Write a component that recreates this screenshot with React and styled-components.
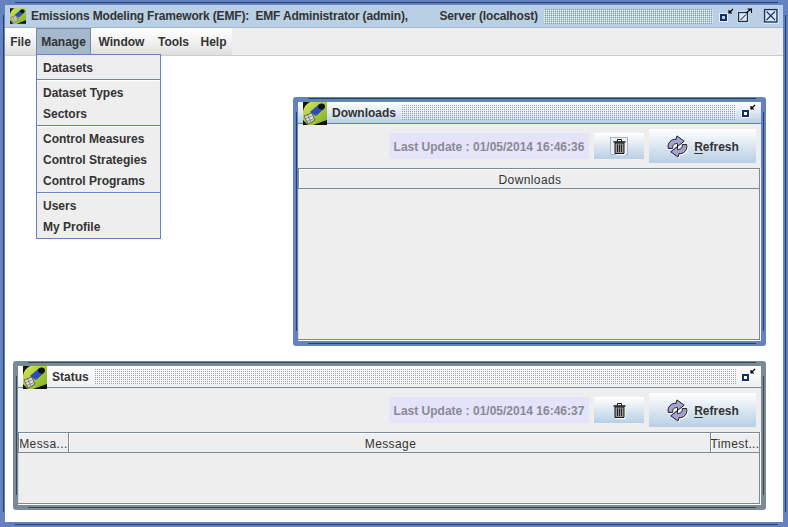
import React from 'react';
import styled, { createGlobalStyle } from 'styled-components';

const GlobalStyle = createGlobalStyle`
  html, body {
    margin: 0;
    padding: 0;
    background: #fff;
  }
  body {
    font-family: "Liberation Sans", Arial, sans-serif;
    font-size: 12px;
    color: #333;
  }
`;

const Frame = styled.div`
  position: relative;
  width: 788px;
  height: 527px;
  box-sizing: border-box;
  border: 5px solid #6382bf;
  display: flex;
  flex-direction: column;
  background: #fff;
`;

/* the dark grooves that run inside a Metal window border */
const Groove = styled.div`
  position: absolute;
  inset: 0;
  pointer-events: none;
  &::before {
    content: '';
    position: absolute;
    left: 10px;
    right: 5px;
    top: ${(p) => -p.$top}px;
    bottom: -3px;
    border-top: 1px solid ${(p) => p.$color};
    border-bottom: 1px solid ${(p) => p.$color};
  }
  &::after {
    content: '';
    position: absolute;
    left: -2px;
    right: -3px;
    top: 10px;
    bottom: 10px;
    border-left: 1px solid ${(p) => p.$color};
    border-right: 1px solid ${(p) => p.$color};
  }
`;

const TitleBar = styled.div`
  height: 23px;
  flex: none;
  box-sizing: border-box;
  display: flex;
  align-items: center;
  padding: 0 4px 0 5px;
  background: #b8cfe5;
  border-bottom: 1px solid #a3b8cc;
  font-weight: bold;
  color: #333;
  white-space: pre;
`;

const MainTitle = styled.span`
  margin-left: 5px;
  letter-spacing: -0.17px;
`;

const Bumps = styled.div`
  flex: 1;
  height: 15px;
  margin: 0 ${(p) => p.$right || 6}px 0 6px;
  background: conic-gradient(${(p) => p.$dark} 25%, transparent 0 50%, #fff 0 75%, transparent 0) 0 0 / 2px 2px;
  opacity: 0.75;
`;

const WindowIcons = styled.div`
  display: flex;
  align-items: center;
  gap: 2px;
`;

const CloseSlot = styled.div`
  display: flex;
  margin-left: 8px;
`;

const MenuBar = styled.div`
  height: 28px;
  flex: none;
  box-sizing: border-box;
  display: flex;
  background: #eee;
  border-bottom: 1px solid #ccc;
`;

const MenuItem = styled.div`
  width: ${(p) => p.$w}px;
  box-sizing: border-box;
  line-height: 29px;
  text-align: center;
  font-weight: bold;
  color: #333;
  background: ${(p) => (p.$open ? '#a3b8cc' : 'linear-gradient(#fff, #f2f2f2 50%, #dedede)')};
  box-shadow: ${(p) => (p.$open ? 'inset 1px 1px 0 #7a8a99, inset -1px 0 0 #7a8a99' : 'none')};
`;

const Desktop = styled.div`
  position: relative;
  flex: 1;
  background: #fff;
`;

const Popup = styled.div`
  position: absolute;
  left: 31px;
  top: -2px;
  width: 125px;
  box-sizing: border-box;
  background: #eee;
  border: 1px solid #6382bf;
  font-weight: bold;
  z-index: 5;
`;

const PopupGroup = styled.div`
  display: flex;
  flex-direction: column;
  padding: 2px 0 1px;
  & + & {
    border-top: 1px solid #6382bf;
    box-shadow: inset 0 1px 0 #fff;
  }
`;

const PopupItem = styled.div`
  height: 21px;
  line-height: 23px;
  padding-left: 6px;
  color: #333;
`;

const Internal = styled.div`
  position: absolute;
  left: ${(p) => p.$x}px;
  top: ${(p) => p.$y}px;
  width: ${(p) => p.$w}px;
  height: ${(p) => p.$h}px;
  box-sizing: border-box;
  border: 5px solid ${(p) => p.$color};
  border-radius: 3px;
  background: #eee;
  display: flex;
  flex-direction: column;
`;

const InnerTitle = styled.div`
  height: 22px;
  flex: none;
  box-sizing: border-box;
  display: flex;
  align-items: flex-start;
  padding: 0 4px 0 5px;
  font-weight: bold;
  color: #333;
  background: ${(p) => (p.$active ? 'linear-gradient(#fff, #b8cfe5)' : 'linear-gradient(#fff, #eee)')};
  border-bottom: 1px solid ${(p) => (p.$active ? '#6382bf' : '#7a8a99')};
`;

const TitleLabel = styled.span`
  margin-left: 5px;
  line-height: 23px;
`;

const InnerBumps = styled(Bumps)`
  margin-top: 3px;
  margin-left: 5px;
`;

const InnerIcons = styled.div`
  display: flex;
  margin-top: 2px;
`;

const Toolbar = styled.div`
  height: 44px;
  flex: none;
  box-sizing: border-box;
  display: flex;
  align-items: center;
  justify-content: flex-end;
  padding: 0 5px 0 0;
`;

const LastUpdate = styled.div`
  width: 200px;
  height: 26px;
  box-sizing: border-box;
  padding-top: 2px;
  display: flex;
  align-items: center;
  justify-content: center;
  background: #e3e3fa;
  color: #8a8a93;
  font-weight: bold;
`;

const TrashButton = styled.div`
  width: 50px;
  height: 26px;
  margin-left: 5px;
  display: flex;
  align-items: center;
  justify-content: center;
  background: linear-gradient(#fff, #b8cfe5);
`;

const TrashBox = styled.div`
  width: 18px;
  height: 18px;
  display: flex;
  align-items: center;
  justify-content: center;
  box-shadow: ${(p) => (p.$focus ? 'inset 0 0 0 1px #a3b8cc' : 'none')};
  background: ${(p) => (p.$focus ? '#eee' : 'transparent')};
  svg {
    filter: drop-shadow(1px 1px 0 #fff);
  }
`;

const RefreshButton = styled.div`
  width: 107px;
  height: 34px;
  margin-left: 5px;
  display: flex;
  align-items: center;
  justify-content: center;
  gap: 5px;
  background: linear-gradient(#fff, #b8cfe5);
  font-weight: bold;
  color: #333;
  svg {
    filter: drop-shadow(1px 1px 0 #fff);
  }
  span {
    padding-top: 2px;
  }
  u {
    text-decoration-thickness: 1px;
    text-underline-offset: 2px;
  }
`;

const TableArea = styled.div`
  flex: 1;
  margin: 0 1px 1px 0;
  display: flex;
  flex-direction: column;
  border-bottom: 1px solid #7a8a99;
  border-right: 1px solid #7a8a99;
  box-shadow: 1px 1px 0 #fff, inset 1px 0 0 #d8d8d8;
`;

const Header = styled.div`
  height: 21px;
  flex: none;
  box-sizing: border-box;
  display: flex;
  border-top: 1px solid #7a8a99;
  border-bottom: 1px solid #7a8a99;
  background: #eee;
`;

const HeaderCell = styled.div`
  flex: ${(p) => (p.$w ? `0 0 ${p.$w}px` : 1)};
  box-sizing: border-box;
  min-width: 0;
  padding: 2px 0 0 ${(p) => (p.$w ? 0 : 2)}px;
  display: flex;
  align-items: center;
  justify-content: center;
  border-left: 1px solid #7a8a99;
  box-shadow: inset 1px 1px 0 #fff;
  color: #333;
  letter-spacing: 0.4px;
  white-space: nowrap;
  overflow: hidden;
`;

const EmfIcon = ({ w = 24, h = 23 }) => (
  <svg width={w} height={h} viewBox="0 0 24 23">
    <defs>
      <linearGradient id="emfLime" x1="0" y1="0" x2="1" y2="1">
        <stop offset="0" stopColor="#d6e85a" />
        <stop offset="1" stopColor="#7fae20" />
      </linearGradient>
    </defs>
    <rect width="24" height="23" fill="url(#emfLime)" />
    <path d="M0 0h7C3 2 1 5 0 9zM24 23H10l14-5zM0 18l5 5H0z" fill="#111" />
    <path d="M7 10L15 3l6 4-8 7z" fill="#2c4fb5" />
    <ellipse cx="18.500" cy="4.500" rx="3.500" ry="3" fill="#111" />
    <path d="M1 14l8-3 3 7-7 4z" fill="#ddd" stroke="#333" strokeWidth="0.7" />
    <path d="M3 16.500l7-3M4 19.500l7-3M4.500 12.500l3 7" stroke="#555" strokeWidth="0.6" />
  </svg>
);

const MinimizeIcon = ({ fill = '#b8cfe5' }) => (
  <svg width="16" height="16" viewBox="0 0 16 16">
    <rect x="0" y="5" width="9" height="9" fill="#fff" fillOpacity="0.7" />
    <rect x="1" y="6" width="7" height="7" fill="#122f66" />
    <rect x="3" y="8" width="3" height="3" fill={fill} />
    <path d="M14 1L10 5M10 2v3h3" fill="none" stroke="#000" strokeWidth="1.200" />
  </svg>
);

const MaximizeIcon = () => (
  <svg width="16" height="16" viewBox="0 0 16 16">
    <rect x="0" y="3" width="12" height="12" fill="#fff" fillOpacity="0.7" />
    <rect x="1.500" y="4.500" width="9" height="9" fill="#dbe6f1" stroke="#122f66" strokeWidth="1.300" />
    <path d="M3.500 12L9 6.500" stroke="#000" />
    <path d="M9 5L14 1M10.500 1h4v4" fill="none" stroke="#000" strokeWidth="1.100" />
  </svg>
);

const CloseIcon = () => (
  <svg width="16" height="16" viewBox="0 0 16 16">
    <rect x="0.500" y="0.500" width="15" height="15" fill="#fff" />
    <rect x="1.500" y="1.500" width="12.500" height="12.500" fill="#dbe6f1" stroke="#122f66" strokeWidth="1.400" />
    <path d="M3.500 3.500l8.500 8.500M12 3.500l-8.500 8.500" stroke="#122f66" strokeWidth="1.100" />
  </svg>
);

const TrashIcon = () => (
  <svg width="13" height="15" viewBox="0 0 13 15">
    <path d="M0.500 3h12" stroke="#111" strokeWidth="1.500" />
    <path d="M4.500 2.500V.5h4v2" fill="none" stroke="#111" />
    <path d="M2 4h9v10.500H2z" fill="#999" stroke="#111" />
    <path d="M4.500 5.500v7.500M6.500 5.500v7.500M8.500 5.500v7.500" stroke="#222" />
  </svg>
);

const RefreshIcon = () => (
  <svg width="23" height="23" viewBox="0 0 24 24">
    <path
      d="M2.500 14C1 8.500 5.500 4 10.500 4.500L11.500 1l7.500 5.500-7 5.500v-3C8.500 8.500 6.500 11 7 14z"
      fill="#a3a3d6"
      stroke="#111"
      strokeLinejoin="round"
    />
    <path
      d="M21.500 10c1.500 5.500-3 10-8 9.500L12.500 23 5 17.500l7-5.500v3c3.500.5 5.500-2 5-5z"
      fill="#a3a3d6"
      stroke="#111"
      strokeLinejoin="round"
    />
  </svg>
);

const Toolrow = ({ time, focus }) => (
  <Toolbar>
    <LastUpdate>Last Update : 01/05/2014 {time}</LastUpdate>
    <TrashButton>
      <TrashBox $focus={focus}>
        <TrashIcon />
      </TrashBox>
    </TrashButton>
    <RefreshButton>
      <RefreshIcon />
      <span>
        <u>R</u>efresh
      </span>
    </RefreshButton>
  </Toolbar>
);

const menus = [
  { name: 'File', w: 31 },
  { name: 'Manage', w: 55, open: true },
  { name: 'Window', w: 61 },
  { name: 'Tools', w: 43 },
  { name: 'Help', w: 37 },
];

const menuGroups = [
  ['Datasets'],
  ['Dataset Types', 'Sectors'],
  ['Control Measures', 'Control Strategies', 'Control Programs'],
  ['Users', 'My Profile'],
];

export default function App() {
  return (
    <>
      <GlobalStyle />
      <Frame>
        <Groove $top={3} $color="#24406e" />
        <TitleBar>
          <EmfIcon w={16} h={16} />
          <MainTitle>Emissions Modeling Framework (EMF):  EMF Administrator (admin),          Server (localhost)</MainTitle>
          <Bumps $dark="#6382bf" />
          <WindowIcons>
            <MinimizeIcon />
            <MaximizeIcon />
            <CloseSlot>
              <CloseIcon />
            </CloseSlot>
          </WindowIcons>
        </TitleBar>
        <MenuBar>
          {menus.map((m) => (
            <MenuItem key={m.name} $w={m.w} $open={m.open}>
              {m.name}
            </MenuItem>
          ))}
        </MenuBar>
        <Desktop>
          <Popup>
            {menuGroups.map((group) => (
              <PopupGroup key={group[0]}>
                {group.map((item) => (
                  <PopupItem key={item}>{item}</PopupItem>
                ))}
              </PopupGroup>
            ))}
          </Popup>

          <Internal $x={288} $y={41} $w={473} $h={249} $color="#6382bf">
            <Groove $top={4} $color="#24406e" />
            <InnerTitle $active>
              <EmfIcon />
              <TitleLabel>Downloads</TitleLabel>
              <InnerBumps $dark="#7a8a99" $right={5} />
              <InnerIcons>
                <MinimizeIcon fill="#fff" />
              </InnerIcons>
            </InnerTitle>
            <Toolrow time="16:46:36" focus />
            <TableArea>
              <Header>
                <HeaderCell>Downloads</HeaderCell>
              </Header>
            </TableArea>
          </Internal>

          <Internal $x={8} $y={305} $w={753} $h={149} $color="#7a8a99">
            <Groove $top={4} $color="#3c4650" />
            <InnerTitle>
              <EmfIcon />
              <TitleLabel>Status</TitleLabel>
              <InnerBumps $dark="#7a8a99" $right={5} />
              <InnerIcons>
                <MinimizeIcon fill="#fff" />
              </InnerIcons>
            </InnerTitle>
            <Toolrow time="16:46:37" />
            <TableArea>
              <Header>
                <HeaderCell $w={50}>Messa...</HeaderCell>
                <HeaderCell>Message</HeaderCell>
                <HeaderCell $w={49}>Timest...</HeaderCell>
              </Header>
            </TableArea>
          </Internal>
        </Desktop>
      </Frame>
    </>
  );
}
